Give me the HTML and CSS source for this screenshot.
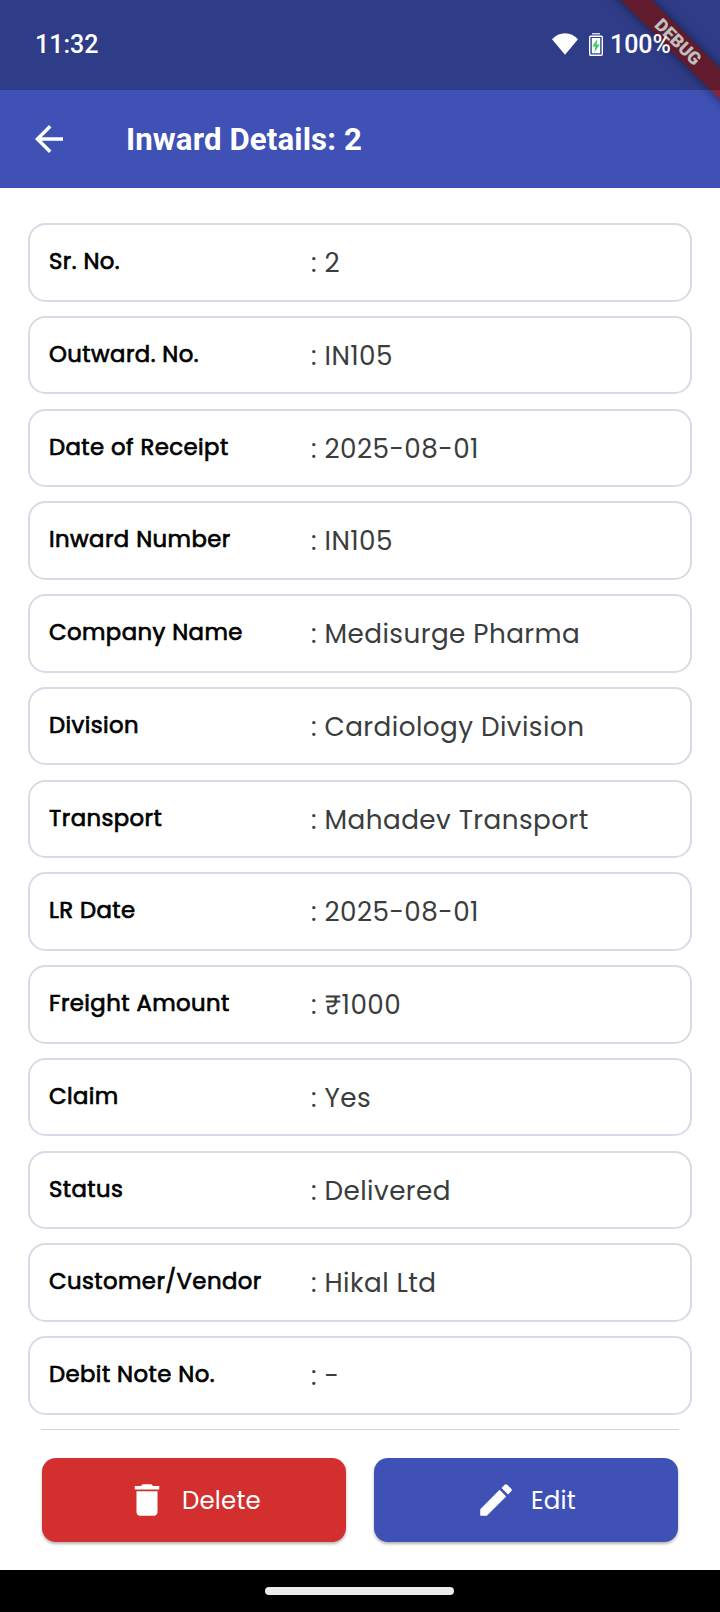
FILE: index.html
```html
<!DOCTYPE html>
<html lang="en">
<head>
<meta charset="utf-8">
<title>Inward Details</title>
<link rel="stylesheet" href="styles.css">
</head>
<body>
<div class="screen">
  <div class="ribbon-clip"><div class="ribbon">DEBUG</div></div>
  <div class="statusbar">
    <span class="clock">11:32</span>
    <div class="indicators">
      <svg class="wifi" viewBox="0 0 26 22" width="26" height="22"><path d="M0 6.2C3.500 2.300 8 .2 13 .2s9.500 2.100 13 6L13 21.800z" fill="#fff"/></svg>
      <svg class="battery" viewBox="0 0 14 23" width="14" height="23">
        <path d="M3 0h8v1.500H3z" fill="#d4d6e6"/>
        <rect x=".7" y="3.200" width="12.600" height="19.100" rx="1" fill="none" stroke="#fff" stroke-width="1.400"/>
        <rect x="2.800" y="5" width="8.400" height="15.300" fill="#fff"/>
        <path d="M8.300 5.800 3.300 13.500h2.900L5.500 19.300 10.800 11.600H7.700z" fill="#3ecf6b"/>
      </svg>
      <span class="percent">100%</span>
    </div>
  </div>
  <header class="appbar">
    <svg class="icon" viewBox="0 0 24 24"><path d="M20 11H7.830l5.590-5.590L12 4l-8 8 8 8 1.410-1.410L7.830 13H20z"/></svg>
    <h1 class="title">Inward Details: 2</h1>
  </header>
  <main class="list">
    <div class="card"><span class="label">Sr. No.</span><span class="value">: 2</span></div>
    <div class="card"><span class="label">Outward. No.</span><span class="value">: IN105</span></div>
    <div class="card"><span class="label">Date of Receipt</span><span class="value">: 2025-08-01</span></div>
    <div class="card"><span class="label">Inward Number</span><span class="value">: IN105</span></div>
    <div class="card"><span class="label">Company Name</span><span class="value">: Medisurge Pharma</span></div>
    <div class="card"><span class="label">Division</span><span class="value">: Cardiology Division</span></div>
    <div class="card"><span class="label">Transport</span><span class="value">: Mahadev Transport</span></div>
    <div class="card"><span class="label">LR Date</span><span class="value">: 2025-08-01</span></div>
    <div class="card"><span class="label">Freight Amount</span><span class="value">: ₹1000</span></div>
    <div class="card"><span class="label">Claim</span><span class="value">: Yes</span></div>
    <div class="card"><span class="label">Status</span><span class="value">: Delivered</span></div>
    <div class="card"><span class="label">Customer/Vendor</span><span class="value">: Hikal Ltd</span></div>
    <div class="card"><span class="label">Debit Note No.</span><span class="value">: -</span></div>
  </main>
  <footer class="actions">
    <button class="btn delete"><svg class="icon" viewBox="0 0 24 24"><path d="M6 19c0 1.100.9 2 2 2h8c1.100 0 2-.9 2-2V7H6zM19 4h-3.500l-1-1h-5l-1 1H5v2h14z"/></svg><span class="caption">Delete</span></button>
    <button class="btn edit"><svg class="icon" viewBox="0 0 24 24"><path d="M3 17.250V21h3.750L17.810 9.940l-3.750-3.750zM20.710 7.040a1 1 0 0 0 0-1.410l-2.340-2.340a1 1 0 0 0-1.410 0l-1.830 1.830 3.750 3.750z"/></svg><span class="caption">Edit</span></button>
  </footer>
  <div class="navbar"><div class="handle"></div></div>
</div>
</body>
</html>
```

FILE: styles.css
```css
* { box-sizing: border-box; }
body { margin: 0; background: #fff; font-family: Poppins, Inter, sans-serif; }
.screen { position: relative; width: 720px; height: 1612px; overflow: hidden; display: flex; flex-direction: column; background: linear-gradient(#3f51b5 188px, #fff 188px); }

/* Debug banner across the top right corner */
.ribbon-clip { position: absolute; top: 0; right: 0; width: 160px; height: 160px; overflow: hidden; }
.ribbon { position: absolute; left: 18px; top: 31px; width: 200px; height: 22px; transform: rotate(45deg); background: linear-gradient(rgba(183, 28, 28, .63), rgba(183, 28, 28, .63)), rgba(0, 0, 0, .35); box-shadow: 0 0 11px rgba(0, 0, 0, .5); color: #fff; font: 900 17.85px/22px Roboto, sans-serif; text-align: center; }

.statusbar { position: relative; height: 90px; flex: none; display: flex; justify-content: space-between; padding: 0 49px 0 35px; background: rgba(0, 0, 0, .25); color: #fff; font: 500 25px/90px Roboto, sans-serif; }
.indicators { display: flex; align-items: center; }
.wifi { margin: 0 11px 3px 0; }
.battery { margin: 0 7px 1px 0; }

.appbar { height: 98px; flex: none; display: flex; align-items: center; padding-left: 28px; color: #fff; }
.icon { width: 42px; height: 42px; fill: currentColor; flex: none; }
.title { margin: 1px 0 0 56px; font: 700 31.2px/40px Roboto, sans-serif; letter-spacing: .12px; }

.list { padding: 35px 28px 0; display: flex; flex-direction: column; gap: 14.25px; }
.card { height: 78.5px; flex: none; display: flex; align-items: flex-start; border: 2px solid #d6dce5; border-radius: 17.5px; padding: 0 18px 0 19px; background: #fff; }
.label { width: 262px; padding-top: 20px; font-size: 22.75px; line-height: 32px; letter-spacing: .43px; color: #000; -webkit-text-stroke: .7px #000; white-space: nowrap; }
.value { padding-top: 18px; font-size: 26.25px; line-height: 40px; letter-spacing: .44px; color: #3a3d3d; white-space: nowrap; }

.actions { height: 141px; margin: auto 41px 0; flex: none; display: grid; grid-template-columns: 304px 304px; gap: 28px; border-top: 1px solid #d2d5da; padding: 28px 1px 0; }
.btn { height: 84px; border: 0; border-radius: 14px; display: flex; align-items: center; padding: 0; color: #fff; font: 400 24.5px/36px Poppins, Inter, sans-serif; letter-spacing: .17px; gap: 14px; box-shadow: 0 2px 3px rgba(0, 0, 0, .3); }
.caption { padding-top: 2px; }
.delete { background: #d32f2f; padding-left: 84px; }
.edit { background: #3f51b5; padding-left: 101px; }

.navbar { height: 42px; flex: none; background: #000; display: flex; align-items: center; justify-content: center; padding-right: 1px; }
.handle { width: 189px; height: 8px; border-radius: 4px; background: #ebebeb; }
```
